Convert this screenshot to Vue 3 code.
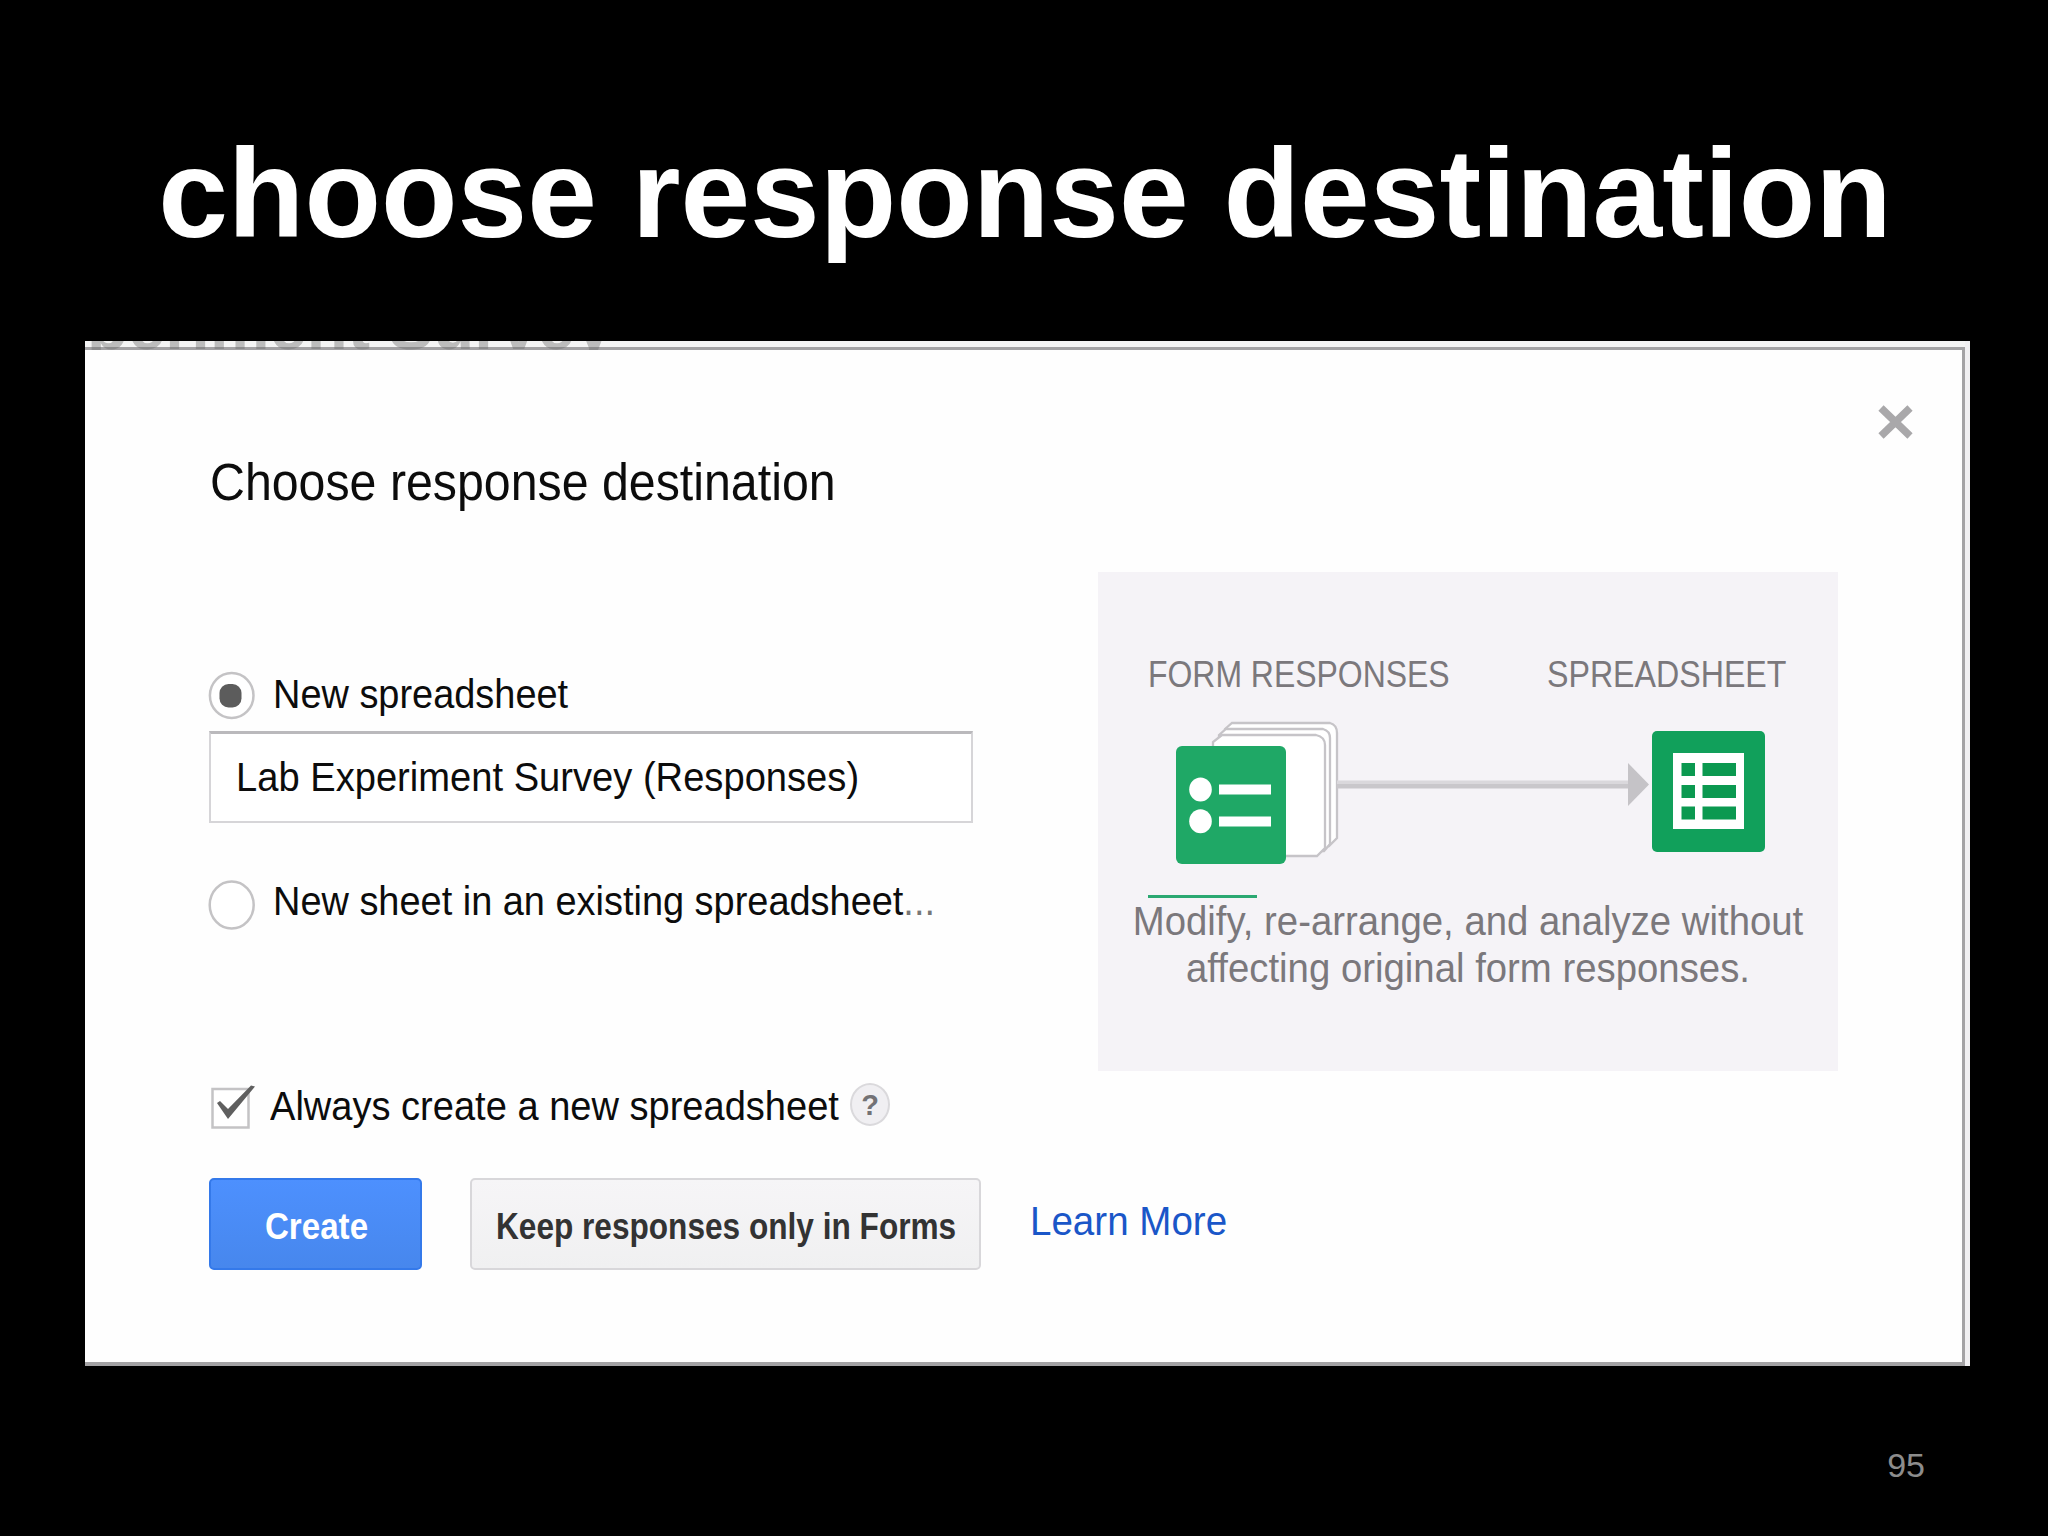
<template>
  <div class="slide">
    <h1 class="slide-title">choose response destination</h1>

    <div class="capture">
      <div class="page-strip"><span class="page-heading">periment Survey</span></div>

      <div class="dialog">
        <div class="dialog-header">
          <h2 class="dialog-title">Choose response destination</h2>
          <svg class="close-icon" viewBox="0 0 38 34">
            <path d="M4 3L33 31M33 3L4 31" />
          </svg>
        </div>

        <div class="dialog-main">
          <div class="form">
            <div class="option" @click="destination = 'new'">
              <svg class="control" viewBox="0 0 48 48">
                <ellipse class="ring" cx="23.7" cy="25.5" rx="21.8" ry="22.5" />
                <rect v-if="destination === 'new'" class="dot" x="11.5" y="14" width="22" height="23.5" rx="9" />
              </svg>
              <span class="text">New spreadsheet</span>
            </div>

            <div class="name-input"><span class="text">{{ sheetName }}</span></div>

            <div class="option existing" @click="destination = 'existing'">
              <svg class="control" viewBox="0 0 48 48">
                <ellipse class="ring" cx="23.7" cy="28" rx="22" ry="23.5" />
                <rect v-if="destination === 'existing'" class="dot" x="12" y="16" width="22" height="23.5" rx="9" />
              </svg>
              <span class="text">New sheet in an existing spreadsheet<span class="dots">...</span></span>
            </div>

            <div class="option always" @click="always = !always">
              <svg class="control" viewBox="0 0 48 48">
                <rect class="box" x="4.5" y="7" width="36" height="38.5" />
                <path v-if="always" class="tick" d="M9 21L12 19L20 27L43 3.5L47 4.5L20 37Z" />
              </svg>
              <span class="text always-label">Always create a new spreadsheet</span>
              <span class="help">?</span>
            </div>
          </div>

          <div class="diagram">
            <div class="diagram-labels">
              <span class="diagram-label from">FORM RESPONSES</span>
              <span class="diagram-label to">SPREADSHEET</span>
            </div>
            <svg class="diagram-art" viewBox="0 0 740 203">
              <!-- stacked response pages -->
              <g class="page">
                <path d="M127 34L134 28H232Q239 30 239 38V143L231 151H127Z" />
                <path d="M121 40L128 34H225Q232 36 232 43V149L226 156H121Z" />
                <path d="M115 51V47L124 40H218Q227 42 227 50V153L219 161H115Z" />
              </g>
              <rect class="form-tile" x="78" y="51" width="110" height="118" rx="6" />
              <g fill="#fff">
                <ellipse cx="102.5" cy="94.5" rx="11.3" ry="12" />
                <ellipse cx="102.5" cy="126.3" rx="11.3" ry="12" />
                <rect x="121" y="89.5" width="52" height="10" />
                <rect x="121" y="121.5" width="52" height="10" />
              </g>
              <!-- arrow to the sheet -->
              <rect x="239" y="85.5" width="292" height="3.5" fill="#dad8dc" />
              <rect x="239" y="89" width="292" height="4.5" fill="#c9c7cb" />
              <path d="M530 68L551 89.5L530 111Z" fill="#c5c3c7" />
              <rect class="sheet-tile" x="554" y="36" width="113" height="121" rx="5" />
              <rect x="575" y="58" width="71" height="76" fill="#fff" />
              <g class="cells">
                <template v-for="y in [68, 90, 111.5]" :key="y">
                  <rect x="583.5" :y="y" width="13.5" height="13" />
                  <rect x="604.5" :y="y" width="33.5" height="13" />
                </template>
              </g>
              <rect x="50" y="200" width="109" height="3" fill="#2ba872" />
            </svg>
            <p class="diagram-caption">Modify, re-arrange, and analyze without<br />affecting original form responses.</p>
          </div>
        </div>

        <div class="actions">
          <button class="btn primary"><span>Create</span></button>
          <button class="btn secondary"><span>Keep responses only in Forms</span></button>
          <a class="learn-more">Learn More</a>
        </div>
      </div>
    </div>

    <div class="slide-number">95</div>
  </div>
</template>

<script setup>
import { ref } from "vue";

const destination = ref("new");
const always = ref(true);
const sheetName = ref("Lab Experiment Survey (Responses)");
</script>

<style>
body {
  margin: 0;
  background: #000;
}
</style>

<style scoped>
.slide {
  box-sizing: border-box;
  width: 2048px;
  height: 1536px;
  padding-top: 119px;
  background: #000;
  overflow: hidden;
  font-family: "Liberation Sans", Arial, sans-serif;
}

.slide-title {
  margin: 0 0 72px;
  padding-left: 2px;
  color: #fff;
  font-size: 125.3px;
  line-height: 150px;
  font-weight: bold;
  text-align: center;
  white-space: nowrap;
}

.capture {
  box-sizing: border-box;
  width: 1885px;
  height: 1025px;
  margin-left: 85px;
  padding-right: 5px;
  background: #f0eff1;
}

/* sliver of the page behind the dialog, ending in the dialog's top edge */
.page-strip {
  height: 9px;
  overflow: hidden;
  background: linear-gradient(#f4f4f4 6px, #a3a2a4 6px);
}

.page-heading {
  display: block;
  margin: -52px 0 0 2px;
  color: rgba(110, 110, 110, 0.42);
  font-size: 67px;
  line-height: 74px;
  font-weight: bold;
  white-space: nowrap;
}

.dialog {
  box-sizing: border-box;
  height: 1016px;
  border: solid #a3a2a4;
  border-width: 0 3px 4px 0;
  background: #fefefe;
  color: #0c0c0c;
}

.dialog-header {
  display: flex;
  justify-content: space-between;
  box-sizing: border-box;
  height: 160px;
  padding: 55px 47px 0 125px;
}

.dialog-title {
  margin: 48px 0 0;
  font-size: 51px;
  line-height: 60px;
  font-weight: normal;
  white-space: nowrap;
  transform: scaleX(0.947);
  transform-origin: left;
}

.close-icon {
  width: 38px;
  height: 34px;
}

.close-icon path {
  fill: none;
  stroke: #a9a8aa;
  stroke-width: 7.5;
}

.dialog-main {
  display: flex;
  height: 620px;
}

.form {
  box-sizing: border-box;
  width: 1013px;
  padding: 160px 0 0 123px;
}

.option {
  display: flex;
  align-items: center;
  gap: 17px;
  height: 48px;
}

.text {
  font-size: 41px;
  line-height: 48px;
  white-space: nowrap;
  transform: scaleX(0.925);
  transform-origin: left;
}

.dots {
  color: #777;
}

.control {
  flex: none;
  width: 48px;
  height: 48px;
  overflow: visible;
}

.ring,
.box {
  fill: #fff;
  stroke: #c4c3c5;
  stroke-width: 2.5;
}

.dot {
  fill: #5c5c5c;
}

.tick {
  fill: #5f5f5f;
}

.name-input {
  box-sizing: border-box;
  display: flex;
  align-items: center;
  width: 764px;
  height: 92px;
  margin: 13px 0 0 1px;
  padding: 0 0 1px 25px;
  border: 2px solid #d6d5d8;
  border-top: 3px solid #bab9bc;
  background: #fff;
}

.name-input .text {
  transform: scaleX(0.93);
}

.existing {
  margin-top: 54px;
}

.always {
  gap: 0;
  margin-top: 157px;
}

.always-label {
  width: 580px;
  margin-left: 14px;
  transform: scaleX(0.928);
}

.help {
  box-sizing: border-box;
  width: 40px;
  height: 43px;
  margin-bottom: 3px;
  border: 2px solid #dad9dc;
  border-radius: 50%;
  background: #f0eff2;
  color: #737275;
  font-size: 29px;
  line-height: 40px;
  font-weight: bold;
  text-align: center;
}

.diagram {
  box-sizing: border-box;
  width: 740px;
  height: 499px;
  margin-top: 62px;
  padding-top: 83px;
  background: #f5f3f7;
  color: #7b787c;
}

.diagram-labels {
  display: flex;
  height: 40px;
  padding-left: 50px;
}

.diagram-label {
  width: 399px;
  font-size: 37px;
  line-height: 40px;
  white-space: nowrap;
  transform: scaleX(0.863);
  transform-origin: left;
}

.diagram-label.to {
  width: 289px;
  transform: scaleX(0.869);
}

.diagram-art {
  display: block;
  width: 740px;
  height: 203px;
}

.page path {
  fill: #fff;
  stroke: #c6c4c8;
  stroke-width: 2.3;
}

.form-tile {
  fill: #1fa866;
}

.sheet-tile {
  fill: #11a05b;
}

.cells rect {
  fill: #0b9950;
}

.diagram-caption {
  margin: 0;
  font-size: 41px;
  line-height: 47px;
  text-align: center;
  white-space: nowrap;
  transform: scaleX(0.935);
}

.actions {
  display: flex;
  align-items: center;
  height: 92px;
  margin: 48px 0 0 124px;
}

.btn {
  box-sizing: border-box;
  height: 92px;
  padding: 5px 0 0;
  border-radius: 5px;
  font-family: inherit;
  font-size: 36px;
  font-weight: bold;
  white-space: nowrap;
}

.btn span {
  display: block;
  transform: scaleX(0.92);
}

.primary {
  width: 213px;
  padding-left: 2px;
  border: 2px solid #3479ea;
  background: linear-gradient(#4d90fe, #4787ed);
  color: #fff;
}

.secondary {
  display: flex;
  justify-content: center;
  align-items: center;
  width: 511px;
  margin-left: 48px;
  padding-left: 2px;
  border: 2px solid #d8d7da;
  background: linear-gradient(#f6f5f7, #f0f0f1);
  color: #333;
}

.secondary span {
  transform: scaleX(0.878);
}

.learn-more {
  margin-left: 49px;
  padding-bottom: 6px;
  color: #1a56c8;
  font-size: 41px;
  line-height: 48px;
  white-space: nowrap;
  transform: scaleX(0.94);
  transform-origin: left;
}

.slide-number {
  margin-top: 79px;
  padding-right: 123px;
  color: #8c8c8c;
  font-size: 34px;
  line-height: 40px;
  text-align: right;
}
</style>
